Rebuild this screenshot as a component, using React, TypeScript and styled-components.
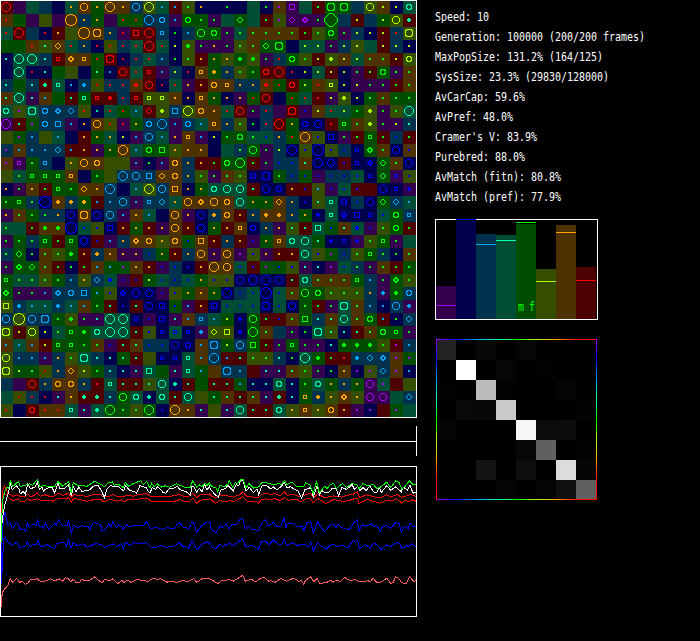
import React from "react";
import styled, { createGlobalStyle } from "styled-components";

const Global = createGlobalStyle`
  html, body { margin: 0; background: #000; }
  * { box-sizing: border-box; }
`;

type Hue = "p" | "b" | "a" | "t" | "g" | "o" | "n" | "r";

const BRIGHT: Record<Hue, string> = {
  p: "#aa00ff", b: "#0000ff", a: "#00a5ff", t: "#00ffaa",
  g: "#00ff00", o: "#aaff00", n: "#ffa500", r: "#ff0000",
};
const DARK: Record<Hue, string> = {
  p: "#34004d", b: "#00004d", a: "#00324d", t: "#004d35",
  g: "#004d00", o: "#344d00", n: "#4d3200", r: "#4d0000",
};
const HUES: Hue[] = ["p", "b", "a", "t", "g", "o", "n", "r"];

/* One token per cell: ground hue, then the marker's hue and shape. */
const WORLD = [
  "Rrl P T A B Tn. Nnm Gn. Nnl Nn. Aam Ool Ta. Ra. Og. Bn. B Bg. B T Bg. Np. Ppq T Rg. GgM GgM A Oom No. Bo. Ttc",
  "Nr. G P O P NnX An. Gn. P Gr. Gr. Aal Aac Pa. Ggc Gg. Pg. T Ggd T Rg. Op. Ppd Ppe Pg. GgY A Ro. A Go. Oom Rt+",
  "Tr. Rrl A Br. Rn. O NnX NnM An. Pr. Rrq Rrl Aas Bg. Aa. Ggm Ggc Pg. Tg. Ng. Ng. Ng. Ng. Rg. Og. Ggc Pg. Ao. Bo. Ro. Ar. OoM",
  "G G Nr. Ot. Nnd Tr. An. Br. Or. Ar. Tr. Rrl Tr. Bo. Og+ Pg. Pn. Pg. Og. Ng. Ggd GgM B To. To. Pg. Ao. Oo. T Ro. Ao. Bo.",
  "Bt. Ttl Ttl At. Rrs Nne Nns Gr. RrM Br. Ar. Tr. Aa. Bg. Og. Rn. Gn. On. Gg+ Og+ Pg. Ar. Ggc Og. Ro. Oo+ No. To. Ng. Ng. Ro. Ooc",
  "B Ttl Br. Bt. G O B Gt. Ba. Rrm Tr. Rrs Pa. Ao. Br. Nns Gn+ An. Og. Gg. Rrc Rrl Br. Bo. To. Ro. Bo. Pg. Rg. Ggc Pg. Ng.",
  "At. G At. Rt+ Tts Ba. Aa+ Or. Ar. Ar. Nr+ Rrm Br. Tr. Pn. Rn. Nnc Nns An. An. Nr+ Gr. Rrc Go. Nr. Oos Bo. Po. Pg. Pg. Rg. Ng.",
  "Nt. Ttl Pt. Na. G Rt. Gts Rrs Rr+ Ar. Rrs Oos Oos Nn. Bn. Nns Gn. Bn. Pn. Gr. Rrm B Gr. Tr. Rr. Po. Oo+ Bo. Gg. Ng. Gg. Gg.",
  "Ttc Op. TtM Aac Aae Aad Or. Bt. Tr. Gr. Ta. Rrd Oo+ Aaq Ool Nnc Nn. Tr. Rrm Pg. Ar. P RrM Pb. No. Tr. To. Gg. Oo+ Pg. Og. Ttl",
  "Ppl Rt. Gp. Aac Aaq Pa. Bn. Nnm Or. Pr. Gn. Aac Aal Pa. Aac Ta. Nns An. Og. Bg. Ar. Rrl Gn. Bbc Bbm Rr. Ggs Ng. Oo+ Pg. Po. At.",
  "O Gp. Aa. O Ta. B Rn. Gn. Tn. Bo. Pa. Aam Ta. Pn. Nns Pa. Bo. Gg. Ggc Tg. Tb. An. Gr. Nnl Ob. Bbq Pg. Rg. Ggs Rg. Ab. Rg.",
  "Ap. Na. Aa. Aa. Aad Ra. Rn. Pn. Gn. Nnl Ta. Ggc Ggq On. Nn. Nn. B T Ag. Ggm Pg. Ao. Bbl Ob. BbX Ob. Ab. Bbs Gge Ng. Bbm Nb.",
  "Np. Pps Gg. Aas B On. Nnm Nnc O O Pa. Bg. Pa. Nnc An. Rn. Rg. Ggc Ggl Rg. Pg. Ab. Ab. Nt. Bbl Bbm Rb. Bbs Bbe Ggd Ng. Bbm",
  "O Tg. Ggs Ggs Ggs Nns B Gg. O Aal Aam Aaq Nnd Nnc An. Og. Pg. Ng. Og. Bbc BbM Gg. Ab. Gb. Pb. Ab. Ab. Tb. Bbs Ggd Pbs Ob.",
  "Bn. Pg. Nn. Rg. Ggs Gg. Nnd Nn. Aal B Ta. Ool Aam Nnq Bn. Gn. Ttc Ttm Ttm Rt. Bbm Bbc Rn. Rb. Oa. Pb. Tb. Rb. R Bbm Bbs Pb+",
  "Gg. Ggs Ag. BbX Nn+ An+ Gn+ Ra. Aa. Aam Pa. Aas Aad Tn. Nnm Nne Nnm Nnc Ttm Gn. Gn. Nnd An. Bb. Ot. Tts Bbc Ab. Bbm Ggd Aad Ta.",
  "Pn. Ng. Gg. Ag. An. Bbm NnM Bbm Aam Pa. Nn. Ta. B Nnm Pn. Bbm An+ Nnc Rn. An. Nn+ Nn+ An. Gn. Bb+ Tts Bbe Bbq Bbs Tb. Ggc Aas",
  "Tg. T Rg. Ng+ Ng+ BbX Tb. Ob. Bbq Rn. Gn. Rn. Pn. Nnm Rn. Bbm Gn. Rn. Nns Bbc An. Pn. Ot. Rt. Ttq Gb. Nt. Tb+ Pb. Og. Ggc Rg.",
  "Pg. Gg. Ag. Ggs Rg. Ggs Bbm Rb. Pa. An. Nne Nnc On. Nnc Gb. Nnq Rn. An. Rn. Pb. Gn. Nns Ttc Ttm Gt. Bb+ Bbs Pb+ Og. Ggs Pg. T",
  "Ag. Ggd Bg. Ng. Og. Gg+ Rn. An+ Nn. Pn. Pn. Ab. Gn. Rn. An. Nnm Pn. Nnm Pp. Ob. Pn. Rn. Rn. Ttm Ob. Gp. Ab. Og. Ggs Ag. Bg. Ng.",
  "Pg. Gge Ggd Ng. Rg. Bg. Rg. Na. Ga. Gp. Nn. Rn. Pb. Ab. Bb. Rn. Nnl Nnm Tb. Rb. Gp. Gb. Ob. Pt. Bt. Pp. Tb. Ag. Pg. Ng. Rg. Gg.",
  "Ggs Tg. Tg. Og. Gg. Aa. On. Aad Tb+ Pb. Rb. Go. Tb. Ab. Tb. Gn. Ob. Ob. Bbm Bbl Bbl Bbm Rt. Ttc Ng. Ng. Ng. Ggs Aa. Pg. Gge Og.",
  "Gge Pg. Pg. Pa. Aae Aac Aaq Ga. Ob. Bbe Bbm Bbm Pb. Ob. Gn. Nn. Gn. Bbl Ab. Tb. BbX Tb. Ng. Ggm Ggc Og. Og. Og. An. Pa+ Gg+ Aac",
  "Ooq Aa+ Ta. Ta. Aa+ Ta. Na. Gg. Rt. Bb. Rt. Bbm Bbq Gb. Pa. Rn. Bbq Tb. Tb. Tb. BbM Tb. Bbm Gg. Rg. Pg. TtM Ng. Aa. Ba. Aam Pa+",
  "Aam OoX Aam AaM Gg. Og+ Pg. Pt. Ttl Ttl Bbs Pb. Bbq Pt. Na. Aas Ta. Go. Bb+ Ggm Rg. Rb. Ng. Ggq At. Nt. Ttm Ng. Ggc Ra. Bg. Aad",
  "OoM Ro. Oom Bo. Tg. Ggs Gg+ Ttc Ttl Ttl Rt. Ob. Bbs Tbs Bbs Pa+ Ood Ooq Bb+ Ggl Ng. A Pg. Bg. TtM Ot. Bt. Rt. Ng. Ggc Ggs Pg.",
  "Na. Ta. Na. Ro. Ggs Ggs Gg. Ng. Pb. Rt. Nt. Ab. Ab. Bbm Bbc Na. AaM Go. Aam Ggq Rg. Pg. Ggs Pg. Pg. Bt. Gg+ Gg+ Gg+ Og. Rp. Aa.",
  "Oom Aa. Aa. Pa. An. Og. TtM At. Bt. Gt. Rt. O Bbs Bbs Tts Na. Aal Ra. Rt. Og. Og. At. Bg. Ttl Gg+ Rg. Rr. Aa+ Aad Aae Np. Gp.",
  "OoM Go. Gg. Or. An. Nnd Oo. Gg. At. Bt. Pt. Ttq G Pt. Tts Ga. N AaM Aa. R Pt. Pt. Nt. Og. Pg. Bg. Nn. Bp. Op. Aad Np. Ba.",
  "A P Rrm An. Nnc Nnc An. Rr. Tts Rt. Rt. Ot. Ttm Bt+ Rt. G Rt. Rt. Ga. Bt. Bt. Ttc Bt. Gg. Ttc Gn. An. Gn. Ppm Tp. R O",
  "T Or. Ar. Br. Pt. Nn. Rt+ Rt+ At. Ggm Ttc Bt+ Ttc Rt. Ttm O Gt. Nt. Rt. Nt. Pt. Rt+ Bt. Gns An+ On. Nne On. Ppm Ppm T Aad",
  "Or. B Rrc Nr. Nr. Tts Pt. Tt+ Ggl Gg. Og. Ggl Bb. Nnl Nn. Pt. O Pt. Ttm Rt. Rt. Ttc On. Nns On. Nnc Rn. Pp. Bp. R Gp. T",
].map((row) => row.split(" "));

/* Closed pixel outlines centred on (6, 6) of a 13px cell. */
const SHAPES: Record<string, string> = {
  ".": "M5 5h2v2h-2z",
  "+": "M5 4h2v1h1v2h-1v1h-2v-1h-1v-2h1z",
  s: "M4 4h4v4h-4zM5 5v2h2v-2z",
  q: "M3 3h6v6h-6zM4 4v4h4v-4z",
  d: "M5 3h2v1h1v1h1v2h-1v1h-1v1h-2v-1h-1v-1h-1v-2h1v-1h1zM5 4v1h-1v2h1v1h2v-1h1v-2h-1v-1z",
  e: "M5 3h2v1h1v1h1v2h-1v1h-1v1h-2v-1h-1v-1h-1v-2h1v-1h1zM5 5v2h2v-2z",
  c: "M4 3h4v1h1v4h-1v1h-4v-1h-1v-4h1zM5 4v1h-1v2h1v1h2v-1h1v-2h-1v-1z",
  m: "M4 2h4v1h1v1h1v4h-1v1h-1v1h-4v-1h-1v-1h-1v-4h1v-1h1zM4 3v1h-1v4h1v1h4v-1h1v-4h-1v-1z",
  M: "M3 2h6v1h1v6h-1v1h-6v-1h-1v-6h1zM4 3v1h-1v4h1v1h4v-1h1v-4h-1v-1z",
  l: "M4 1h4v1h1v1h1v1h1v4h-1v1h-1v1h-1v1h-4v-1h-1v-1h-1v-1h-1v-4h1v-1h1v-1h1zM4 2v1h-1v1h-1v4h1v1h1v1h4v-1h1v-1h1v-4h-1v-1h-1v-1z",
  X: "M4 0h4v1h2v1h1v2h1v4h-1v2h-1v1h-2v1h-4v-1h-2v-1h-1v-2h-1v-4h1v-2h1v-1h2zM4 1v1h-2v2h-1v4h1v2h2v1h4v-1h2v-2h1v-4h-1v-2h-2v-1z",
  Y: "M4 -1h4v1h1v1h1v1h1v1h1v1h1v4h-1v1h-1v1h-1v1h-1v1h-1v1h-4v-1h-1v-1h-1v-1h-1v-1h-1v-1h-1v-4h1v-1h1v-1h1v-1h1v-1h1zM4 0v1h-1v1h-1v1h-1v1h-1v4h1v1h1v1h1v1h1v1h4v-1h1v-1h1v-1h1v-1h1v-4h-1v-1h-1v-1h-1v-1h-1v-1z",
};

const Screen = styled.main`
  width: 700px; height: 641px; overflow: hidden;
  display: grid; grid-template-columns: 417px 1fr; column-gap: 18px;
  background: #000;
`;
const LeftColumn = styled.div`display: flex; flex-direction: column;`;
const RightColumn = styled.div`display: flex; flex-direction: column; padding-top: 7px;`;

const WorldFrame = styled.section`
  width: 417px; height: 418px; overflow: hidden;
  border: 1px solid #fff;
`;
const WorldGrid = styled.div`
  display: grid; width: 416px; margin-left: -1px;
  grid-template-columns: repeat(32, 13px); grid-auto-rows: 13px;
`;
const Cell = styled.div<{ $hue: Hue }>`background: ${(p) => DARK[p.$hue]};`;
const Marker = styled.svg<{ $hue: Hue }>`
  display: block; width: 13px; height: 13px; overflow: visible;
  position: relative; fill: ${(p) => BRIGHT[p.$hue]};
`;

const Timeline = styled.div`
  display: flex; align-items: center; height: 30px; margin-top: 8px;
  border-right: 1px solid #fff;
`;
const Track = styled.div`flex: 1; height: 1px; background: #fff;`;

const ChartFrame = styled.section`
  width: 417px; height: 151px; margin-top: 10px; border: 1px solid #fff;
`;
const ChartSvg = styled.svg`display: block; width: 415px; height: 149px;`;

const Stats = styled.div`height: 200px;`;
const Stat = styled.div`
  height: 20px; color: #fff; white-space: pre;
  font: 10px/20px "DejaVu Sans Mono", monospace; letter-spacing: -0.02px;
  transform: scaleY(1.2);
`;

const BarFrame = styled.section`
  display: flex; align-items: flex-end;
  width: 163px; height: 101px; margin-top: 12px; border: 1px solid #fff;
`;
const Slot = styled.div`
  position: relative; width: 20px; height: 99px;
  display: flex; align-items: flex-end;
`;
const Bar = styled.div<{ $hue: Hue; $height: number }>`
  width: 20px; height: ${(p) => p.$height}px; background: ${(p) => DARK[p.$hue]};
`;
const Level = styled.div<{ $hue: Hue; $top: number }>`
  position: absolute; left: 0; top: ${(p) => p.$top}px;
  width: 20px; height: 1px; background: ${(p) => BRIGHT[p.$hue]};
`;
const BarTag = styled.span`
  position: absolute; left: 2px; bottom: 5px; color: #0f0; white-space: pre;
  font: 10px/14px "DejaVu Sans Mono", monospace; word-spacing: -1px; transform: scaleY(1.2);
`;

const SPECTRUM = "#a0f, #00f, #00a5ff, #00ffaa, #0f0, #af0, #ffa500, #f00 87.5%, #f00";
const MatrixFrame = styled.section`
  position: relative; width: 161px; height: 161px; margin: 19px 0 0 1px; padding-top: 1px;
  overflow: hidden;
  &::before, &::after { content: ""; position: absolute; inset: 0; }
  &::before {
    background: linear-gradient(to right, ${SPECTRUM}) top / 100% 1px no-repeat,
      linear-gradient(to right, ${SPECTRUM}) bottom / 100% 1px no-repeat;
  }
  &::after {
    background: linear-gradient(to bottom, ${SPECTRUM}) left / 1px 100% no-repeat,
      linear-gradient(to bottom, ${SPECTRUM}) right / 1px 100% no-repeat;
  }
`;
const MatrixGrid = styled.div`
  display: grid; grid-template-columns: repeat(8, 20px); grid-auto-rows: 20px;
`;
const Shade = styled.div<{ $v: number }>`background: rgb(${(p) => `${p.$v},${p.$v},${p.$v}`});`;

const STATS = [
  "Speed: 10",
  "Generation: 100000 (200/200 frames)",
  "MaxPopSize: 131.2% (164/125)",
  "SysSize: 23.3% (29830/128000)",
  "AvCarCap: 59.6%",
  "AvPref: 48.0%",
  "Cramer's V: 83.9%",
  "Purebred: 88.0%",
  "AvMatch (fitn): 80.8%",
  "AvMatch (pref): 77.9%",
];
const HEIGHTS = [33, 98, 85, 84, 95, 50, 94, 52];
const LEVELS = [85, -1, 24, 20, 2, 61, 12, 60];
const MATRIX = [
  [35, 0, 8, 0, 6, 0, 1, 0],
  [0, 255, 0, 6, 0, 2, 0, 0],
  [2, 0, 187, 2, 0, 0, 5, 0],
  [0, 9, 8, 201, 0, 0, 0, 3],
  [5, 0, 0, 0, 247, 11, 12, 0],
  [0, 1, 0, 0, 8, 96, 0, 2],
  [0, 0, 20, 0, 14, 0, 220, 5],
  [0, 0, 0, 4, 0, 4, 16, 96],
];

/* Samples in thirds of a pixel, measured from the chart's outer corner. */
const SERIES: { color: string; points: string }[] = [
  { color: "#ff0000", points: "4,210 6,110 9,70 13,57 20,70 24,80 32,84 40,89 50,84 60,88 75,90 82,79 90,89 100,87 112,78 120,88 135,84 150,89 165,87 175,79 190,86 205,79 214,92 222,82 235,87 265,88 280,83 302,83 308,89 330,88 340,83 350,88 370,90 380,86 400,88 420,82 440,81 452,89 500,90 520,87 540,83 555,90 565,89 580,79 590,93 600,84 615,84 628,81 635,88 648,92 660,84 680,87 700,91 720,83 728,75 740,88 775,93 785,83 797,79 815,84 822,79 840,88 853,75 862,85 880,83 905,91 918,82 932,81 942,93 952,81 975,93 1000,87 1025,91 1040,86 1060,82 1072,75 1078,92 1100,84 1120,90 1142,93 1160,84 1172,90 1192,83 1203,91 1218,88 1230,83 1248,88" },
  { color: "#ff0000", points: "4,210 6,140 10,80 20,85 30,97 42,101 52,96 62,104 75,103 82,95 92,102 112,96 125,102 140,100 160,103 174,94 200,96 206,91 214,106 222,94 240,99 262,103 280,99 303,98 312,106 330,97 350,103 365,99 372,106 382,98 405,98 420,96 440,94 455,104 525,103 540,98 555,105 568,105 578,94 590,110 602,100 630,96 646,110 660,101 670,104 690,102 700,105 728,90 742,103 770,105 776,109 785,98 800,96 812,99 822,95 840,101 853,93 865,100 890,98 902,105 918,96 930,95 940,108 953,95 978,110 1000,98 1030,104 1050,100 1062,96 1072,94 1077,110 1100,98 1115,102 1140,109 1160,101 1172,103 1190,96 1205,109 1215,99 1225,105 1236,99 1248,103" },
  { color: "#0000ff", points: "4,340 6,220 10,160 14,136 24,174 31,167 37,188 49,167 55,173 61,187 73,188 77,194 82,168 88,183 98,172 108,176 113,158 118,179 126,179 131,184 137,168 146,188 164,169 169,174 176,158 187,176 202,176 205,160 214,198 222,175 233,182 246,176 257,180 266,179 268,189 279,168 295,169 302,175 306,191 314,191 326,172 333,179 338,166 350,182 356,174 366,181 370,187 380,173 387,181 400,176 429,177 440,165 452,186 467,181 486,188 500,183 522,185 530,174 539,168 552,184 558,181 566,189 576,165 583,170 589,198 605,176 612,173 616,167 630,165 634,189 648,197 661,175 666,182 679,171 687,186 696,172 710,173 719,158 728,155 736,186 748,178 755,187 776,191 786,168 797,159 804,177 815,172 820,165 830,178 842,180 852,153 858,184 862,169 880,170 890,180 905,177 912,191 920,168 932,165 940,199 953,165 964,182 974,194 990,175 1003,173 1008,183 1014,171 1025,182 1047,189 1063,166 1072,160 1077,192 1086,174 1098,178 1115,171 1120,180 1130,175 1141,194 1148,179 1160,176 1172,184 1188,167 1198,171 1204,197 1212,180 1219,179 1225,186 1230,168 1240,180 1248,180" },
  { color: "#0000ff", points: "5,352 7,280 12,215 16,213 25,226 37,236 50,226 60,242 77,237 82,225 90,240 98,232 109,234 114,221 120,237 130,240 140,233 164,246 170,230 190,226 200,238 205,216 213,244 220,228 234,238 248,230 262,242 285,231 304,232 313,242 330,235 340,231 351,240 364,231 371,246 376,226 389,235 405,226 415,230 440,228 454,241 468,242 480,236 500,241 522,238 538,228 551,241 558,237 567,245 576,219 590,248 606,234 618,225 630,229 636,241 647,246 661,232 668,240 681,232 690,230 699,237 728,216 737,238 758,237 775,247 784,225 797,223 807,234 820,219 836,234 847,231 853,218 860,236 880,228 892,236 910,232 925,239 932,225 940,252 953,227 964,238 980,247 990,235 1002,232 1010,240 1025,235 1044,243 1060,220 1067,227 1073,220 1078,245 1097,233 1111,244 1120,229 1130,233 1143,248 1160,234 1171,240 1190,227 1199,230 1206,246 1220,236 1226,240 1234,231 1248,239" },
  { color: "#ffffff", points: "5,180 8,150 14,115 20,95 28,66 31,51 37,68 50,57 57,67 61,81 70,74 76,83 83,52 92,66 106,60 112,46 118,68 126,61 130,73 140,64 156,62 164,78 174,48 180,65 193,66 205,53 214,88 220,60 228,76 236,61 245,73 260,72 270,68 280,58 294,55 304,71 309,83 313,94 320,67 332,55 340,60 356,59 365,68 371,72 377,56 390,72 402,73 410,79 420,56 430,60 438,62 444,72 450,78 457,62 467,68 473,59 482,68 489,77 497,79 508,65 519,66 531,58 541,69 550,72 561,76 571,86 576,58 582,60 590,77 598,64 606,75 614,53 621,70 628,58 634,71 646,84 655,90 662,70 676,65 684,56 692,64 700,72 708,54 716,56 722,41 730,43 738,73 748,61 760,77 771,66 776,83 786,57 800,56 812,66 820,60 830,69 842,60 853,48 861,64 872,59 880,65 894,73 905,94 914,69 930,63 935,66 940,92 951,57 959,84 966,71 974,78 989,75 995,66 1009,66 1016,86 1026,62 1040,68 1056,53 1063,67 1073,59 1080,72 1089,62 1098,71 1110,58 1120,75 1130,78 1138,62 1144,77 1160,56 1172,70 1187,60 1204,75 1210,61 1222,70 1230,55 1239,79 1248,76" },
  { color: "#00ff00", points: "4,227 5,160 8,100 14,75 20,62 26,65 31,42 38,59 55,44 61,59 80,54 90,51 98,55 112,38 120,60 130,55 145,60 164,59 174,43 187,58 197,51 206,44 214,78 220,46 232,56 262,58 284,43 302,52 312,60 326,47 338,45 342,55 355,52 370,62 376,47 386,58 400,50 422,42 430,53 440,43 446,57 450,64 455,49 462,60 472,51 483,61 495,57 509,61 530,51 553,61 570,62 578,42 590,60 598,54 606,60 615,48 621,56 628,48 635,59 648,63 653,75 660,55 674,60 684,51 688,41 698,62 705,48 712,50 723,37 730,38 738,63 747,50 761,64 778,59 784,48 800,48 820,54 836,50 845,53 854,40 860,53 875,46 892,60 912,58 917,48 930,55 940,80 950,43 958,78 974,58 981,66 990,54 1001,50 1009,66 1016,59 1028,50 1040,62 1056,50 1072,55 1077,66 1089,50 1104,58 1120,52 1130,65 1143,60 1160,46 1172,62 1187,42 1198,48 1205,66 1216,58 1228,42 1240,54 1248,54" },
  { color: "#ff5c5c", points: "4,421 5,392 8,375 16,364 25,353 31,335 38,347 50,335 59,347 66,342 76,353 84,349 90,339 112,336 122,345 137,342 152,336 164,342 178,336 188,343 196,333 205,335 212,345 220,337 228,347 240,346 245,337 256,342 266,342 284,330 296,341 306,347 314,338 330,342 338,336 353,350 366,341 372,347 382,340 394,347 412,338 430,342 446,343 459,334 470,337 483,336 500,346 515,343 530,347 545,342 565,343 581,335 590,347 605,336 629,336 653,350 666,341 675,342 684,338 700,343 708,338 718,332 728,325 736,343 745,340 755,337 765,346 781,335 792,331 806,343 816,342 824,347 843,335 859,343 878,335 888,337 897,345 903,341 911,352 917,340 932,330 942,345 951,334 959,350 980,347 990,340 1000,346 1010,340 1022,344 1034,332 1050,342 1065,338 1080,345 1104,342 1111,345 1119,334 1130,346 1142,347 1160,334 1172,350 1180,346 1187,330 1196,334 1205,348 1218,350 1229,330 1241,343 1248,342" },
];

export default function App() {
  return (
    <>
      <Global />
      <Screen>
        <LeftColumn>
          <WorldFrame>
            <WorldGrid>
              {WORLD.flatMap((row, y) =>
                row.map((token, x) => (
                  <Cell key={`${x}-${y}`} $hue={token[0].toLowerCase() as Hue}>
                    {token.length > 1 && (
                      <Marker $hue={token[1] as Hue} viewBox="0 0 13 13" shapeRendering="crispEdges">
                        <path fillRule="evenodd" d={SHAPES[token[2]]} />
                      </Marker>
                    )}
                  </Cell>
                ))
              )}
            </WorldGrid>
          </WorldFrame>
          <Timeline><Track /></Timeline>
          <ChartFrame>
            <ChartSvg viewBox="3 0.5 1245 447" shapeRendering="crispEdges">
              {SERIES.map((s, i) => (
                <polyline key={i} points={s.points} fill="none" stroke={s.color} strokeWidth={3} />
              ))}
            </ChartSvg>
          </ChartFrame>
        </LeftColumn>
        <RightColumn>
          <Stats>{STATS.map((s) => <Stat key={s}>{s}</Stat>)}</Stats>
          <BarFrame>
            {HUES.map((hue, i) => (
              <Slot key={hue}>
                <Bar $hue={hue} $height={HEIGHTS[i]} />
                <Level $hue={hue} $top={LEVELS[i]} />
                {hue === "g" && <BarTag>m f</BarTag>}
              </Slot>
            ))}
          </BarFrame>
          <MatrixFrame>
            <MatrixGrid>
              {MATRIX.flatMap((row, y) => row.map((v, x) => <Shade key={`${x}-${y}`} $v={v} />))}
            </MatrixGrid>
          </MatrixFrame>
        </RightColumn>
      </Screen>
    </>
  );
}
